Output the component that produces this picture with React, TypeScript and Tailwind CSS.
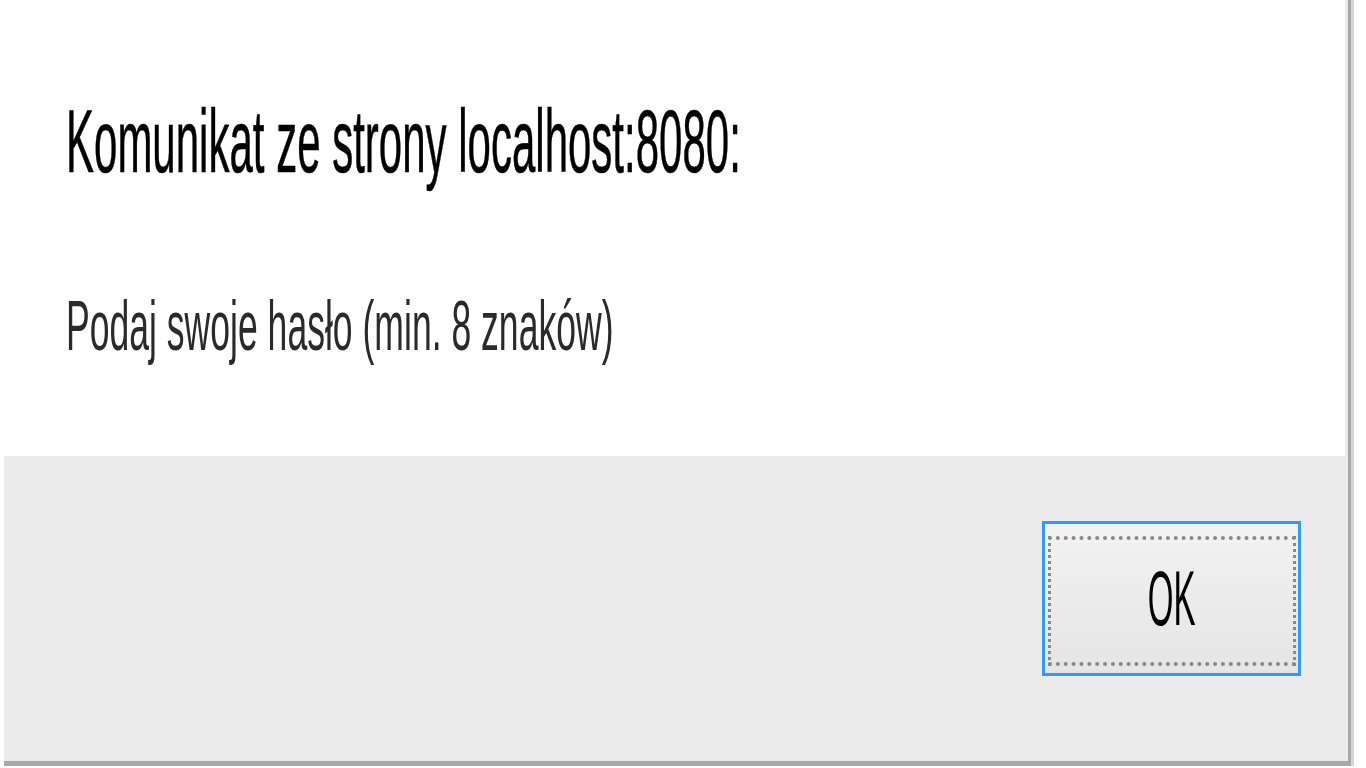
export default function App() {
  return (
    <div className="flex h-[768px] w-[1366px] overflow-hidden bg-white font-['Liberation_Sans',Arial,sans-serif]">
      {/* dialog body */}
      <div className="flex w-[1348px] flex-col">
        <div className="flex h-[456px]">
          <div className="flex w-[1345px] flex-col pl-[66px] pt-[97px]">
            <div className="h-[89px] origin-left scale-x-[0.472] whitespace-nowrap text-[89px] leading-[89px] text-black [-webkit-text-stroke:0.6px_black]">
              Komunikat ze strony localhost:8080:
            </div>
            <div className="mt-[105px] h-[70px] origin-left scale-x-[0.508] whitespace-nowrap text-[70px] leading-[70px] text-[#2a2a2a]">
              Podaj swoje hasło (min. 8 znaków)
            </div>
          </div>
          <div className="w-[3px] bg-[#ebebeb]" />
        </div>

        {/* button bar */}
        <div className="ml-[4px] flex h-[305px] items-start justify-end bg-[#ebebeb] pr-[47px] pt-[65px]">
          <button
            type="button"
            className="flex h-[155px] w-[259px] border-[3px] border-[#3399ff] bg-gradient-to-b from-[#f2f2f2] to-[#e5e5e5] pb-[7px] pl-[3px] pr-[2px] pt-[12px] outline-none"
          >
            <div className="flex flex-1 items-center justify-center border-x-[3px] border-y-[4px] border-dotted border-[#888888]">
              <span className="mb-[6px] scale-x-[0.43] whitespace-nowrap text-[77px] leading-[77px] text-black">OK</span>
            </div>
          </button>
        </div>
        <div className="ml-[4px] h-[5px] bg-[#a8a8a8]" />
      </div>

      {/* window edge */}
      <div className="h-[766px] w-[3px] bg-[#a8a8a8]" />
      <div className="h-[766px] w-[3px] bg-[#d6d6d6]" />
    </div>
  );
}
